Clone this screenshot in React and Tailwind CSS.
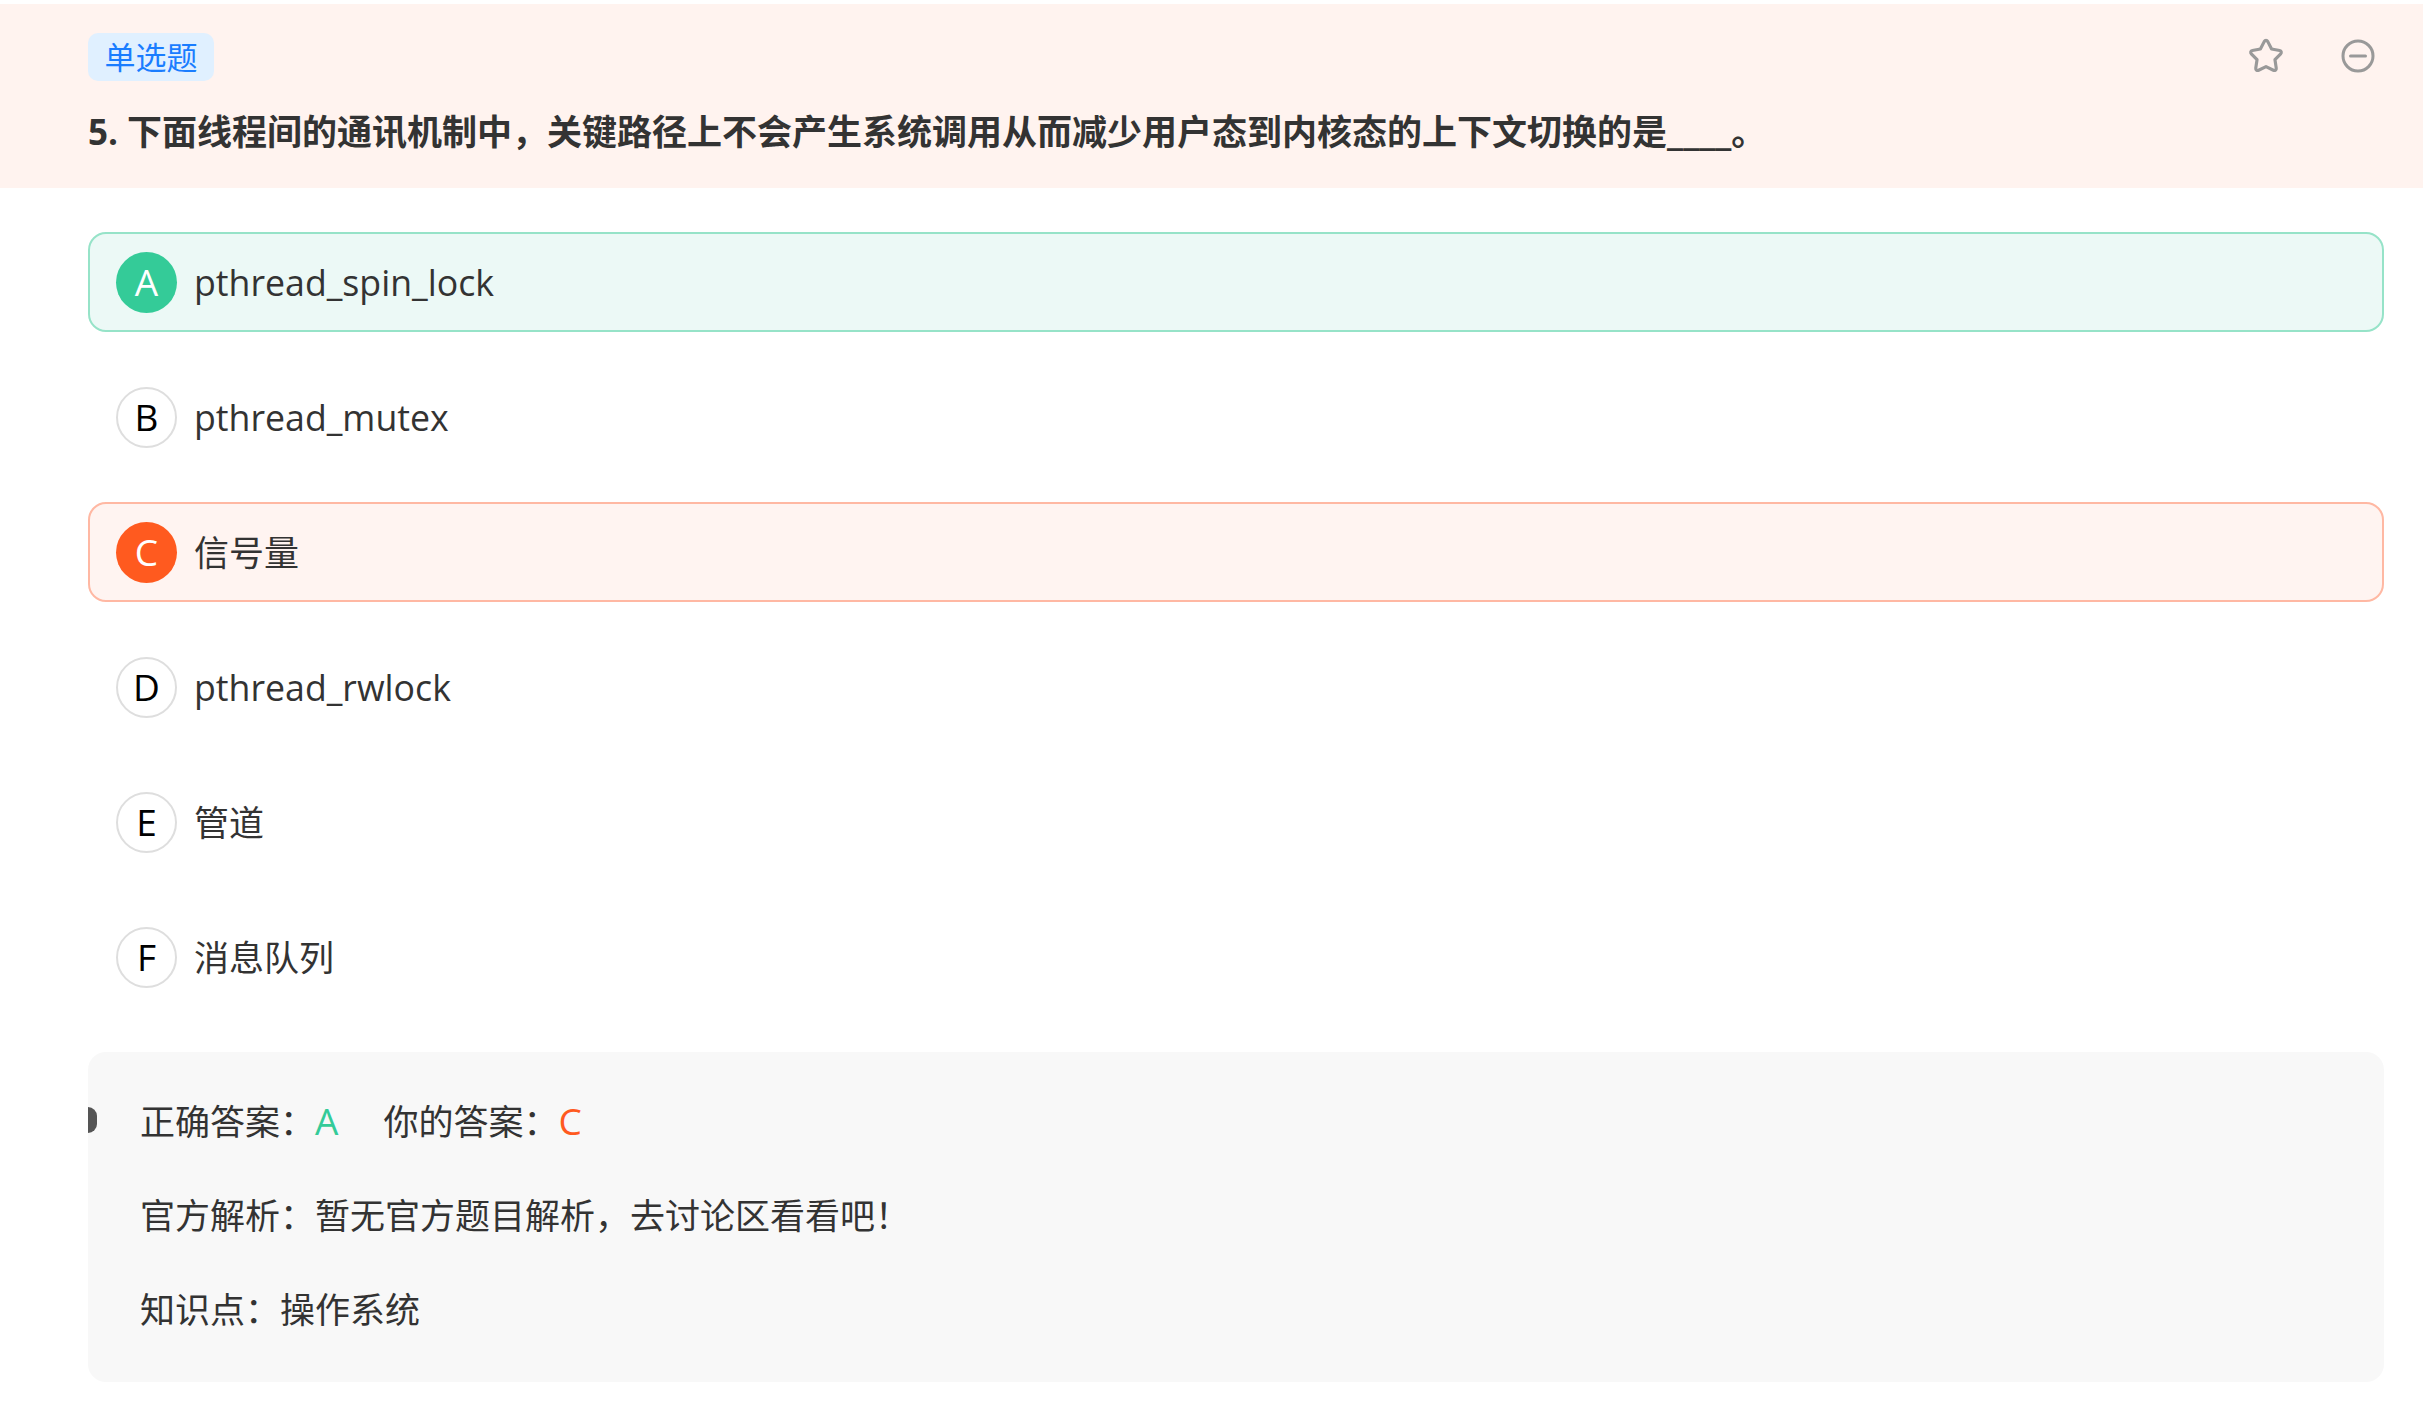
const font = { fontFamily: '"Open Sans", "Noto Sans CJK SC", sans-serif' };

const options = [
  { k: "A", t: "pthread_spin_lock", s: "right", latin: true },
  { k: "B", t: "pthread_mutex", latin: true },
  { k: "C", t: "信号量", s: "wrong" },
  { k: "D", t: "pthread_rwlock", latin: true },
  { k: "E", t: "管道" },
  { k: "F", t: "消息队列" },
];

function Option({ k, t, s, latin }) {
  const row =
    s === "right"
      ? "border-[#96e3c8] bg-[#ecf9f6]"
      : s === "wrong"
        ? "border-[#ffb8a3] bg-[#fff4f1]"
        : "border-transparent bg-white";
  const dot =
    s === "right"
      ? "bg-[#34cb98] text-white"
      : s === "wrong"
        ? "bg-[#ff5a1f] text-white"
        : "border-2 border-[#dedede] bg-white text-black";
  return (
    <div className={`flex h-[100px] items-center rounded-[18px] border-2 pl-[26px] ${row}`}>
      <div className={`flex h-[61px] w-[61px] shrink-0 items-center justify-center rounded-full text-[37px] ${dot}`}>
        {k}
      </div>
      <div className={`ml-[17px] pt-[2px] text-[#333333] ${latin ? "text-[35.7px]" : "text-[35px]"}`}>{t}</div>
    </div>
  );
}

export default function App() {
  return (
    <div className="min-h-[1417px] bg-white pt-[4px] text-[#333333]" style={font}>
      <header className="relative h-[184px] bg-[#fff3ef] pl-[88px] pr-[39px] pt-[29px]">
        <div className="flex h-[48px] w-[126px] items-center justify-center rounded-[10px] bg-[#e0f0ff] text-[31px] text-[#1a7dff]">
          单选题
        </div>
        <h1 className="mt-[25px] text-[35px] font-bold leading-[48px] text-[#333333]">
          5. 下面线程间的通讯机制中，关键路径上不会产生系统调用从而减少用户态到内核态的上下文切换的是<span className="text-[39px]">____</span>。
        </h1>
        <div className="absolute right-[47px] top-[33px] flex items-center gap-[55px] text-[#999999]">
          <svg width="38" height="38" viewBox="0 0 36 36" fill="none" stroke="currentColor" strokeWidth="3" strokeLinejoin="round" strokeLinecap="round">
            <path d="M18 3.2c.8 0 1.3.5 1.700 1.200l3.600 7 7.600 1.400c1.600.3 2.100 2 1 3.100l-5.400 5.600 1.200 8c.2 1.600-1.300 2.700-2.700 2l-7-3.400-7 3.400c-1.400.7-2.900-.4-2.700-2l1.200-8-5.400-5.600c-1.100-1.100-.6-2.800 1-3.100l7.600-1.400 3.600-7c.4-.7.9-1.200 1.700-1.200z" />
          </svg>
          <svg width="36" height="36" viewBox="0 0 36 36" fill="none" stroke="currentColor" strokeWidth="3" strokeLinecap="round">
            <circle cx="18" cy="18" r="15" />
            <path d="M10.500 18h15" />
          </svg>
        </div>
      </header>

      <main className="pl-[88px] pr-[39px] pt-[44px]">
        <div className="flex flex-col gap-[35px]">
          {options.map((o) => (
            <Option key={o.k} {...o} />
          ))}
        </div>

        <section className="relative mt-[45px] flex h-[330px] flex-col gap-[34px] rounded-[18px] bg-[#f8f8f8] pl-[52px] pt-[39px] text-[35px] leading-[60px]">
          <span className="absolute left-0 top-[55px] h-[26px] w-[9px] rounded-r-full bg-[#555555]" />
          <div>
            正确答案：<span className="text-[37px] text-[#34cb98]">A</span>
            <span className="ml-[45px]">你的答案：</span>
            <span className="text-[37px] text-[#ff5a1f]">C</span>
          </div>
          <div>官方解析：暂无官方题目解析，去讨论区看看吧！</div>
          <div>知识点：操作系统</div>
        </section>
      </main>
    </div>
  );
}
